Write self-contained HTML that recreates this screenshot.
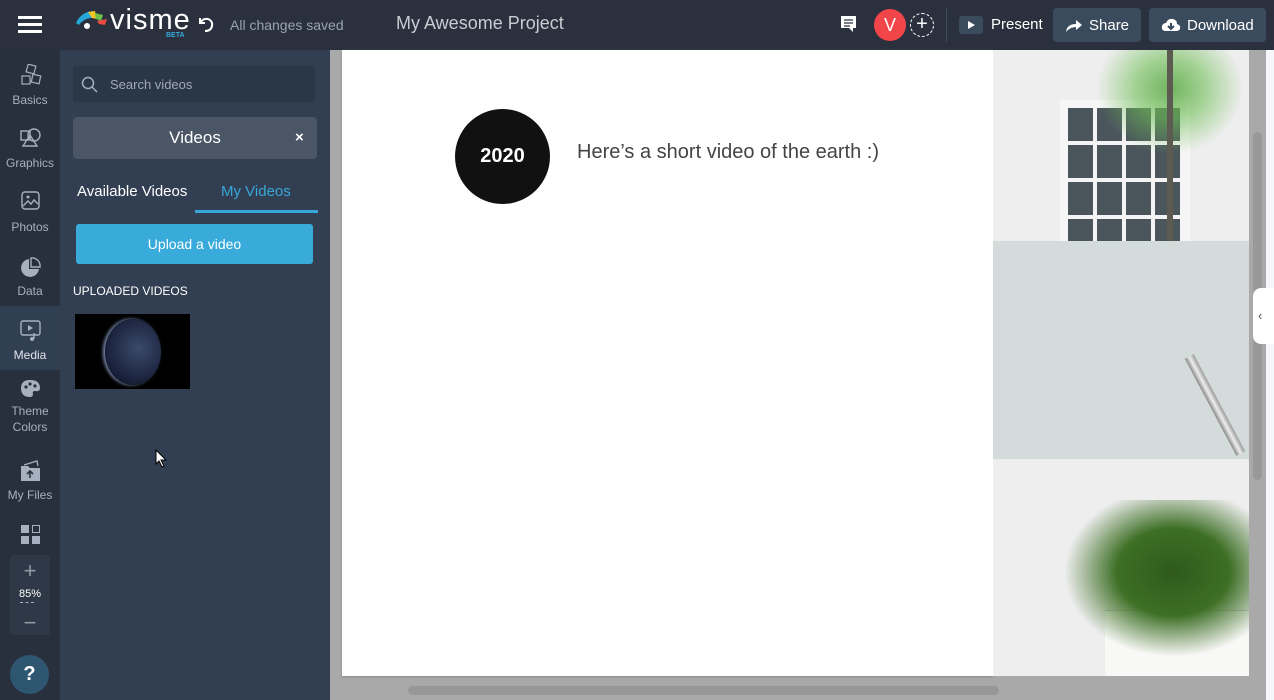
<!DOCTYPE html>
<html><head><meta charset="utf-8"><style>
*{margin:0;padding:0;box-sizing:border-box}
body{width:1274px;height:700px;overflow:hidden;font-family:"Liberation Sans",sans-serif;background:#a9a9a9;position:relative}
.abs{position:absolute}
#top{left:0;top:0;width:1274px;height:50px;background:#2a303d}
#rail{left:0;top:50px;width:60px;height:650px;background:#29303d}
#panel{left:60px;top:50px;width:270px;height:650px;background:#323f52}
.ri{position:absolute;left:0;width:60px;text-align:center;color:#a7b0be;font-family:"Liberation Sans Narrow","Liberation Sans",sans-serif;font-size:12px}
.btn{position:absolute;top:8px;height:34px;border-radius:4px;background:#3b4b5e;color:#fff;font-size:15px;line-height:34px}
</style></head><body>
<div id="top" class="abs">
 <div class="abs" style="left:18px;top:16px;width:24px;height:3px;background:#fff;box-shadow:0 7px 0 #fff,0 14px 0 #fff"></div>
 <svg class="abs" style="left:75px;top:9px" width="34" height="22" viewBox="0 0 34 22"><path d="M1 14 Q6 3 18 2 L20 9 Q10 8 4 16Z" fill="#26a8d8"/><path d="M13 3 L20 2 L22 10 L17 9Z" fill="#f3c623"/><path d="M20 4 L28 6 L26 12 L21 10Z" fill="#6fbf4a"/><path d="M22 12 L32 10 L30 16 L24 15Z" fill="#e84a3c"/><circle cx="12" cy="17" r="3" fill="#fff"/></svg>
 <div class="abs" style="left:110px;top:4px;color:#fff;font-size:29px;letter-spacing:1px">visme</div>
 <div class="abs" style="left:166px;top:32px;color:#36a9de;font-size:7px;font-weight:bold">BETA</div>
 <svg class="abs" style="left:196px;top:14px" width="20" height="20" viewBox="0 0 20 20"><path d="M4 4 V9 H9 M4 9 Q7 4 12 5 Q17 7 16 12 Q15 17 9 17" fill="none" stroke="#fff" stroke-width="2"/></svg>
 <div class="abs" style="left:230px;top:17px;color:#9ba3ae;font-size:14px">All changes saved</div>
 <div class="abs" style="left:396px;top:13px;color:#c8ccd3;font-size:18px">My Awesome Project</div>
 <svg class="abs" style="left:840px;top:15px" width="17" height="19" viewBox="0 0 17 19"><path d="M1 1 H16 V13 H13 V17 L9 13 H1Z" fill="#fff"/><path d="M4 5H13M4 8H13M4 11H10" stroke="#2a303d" stroke-width="1.3"/></svg>
 <div class="abs" style="left:874px;top:9px;width:32px;height:32px;border-radius:50%;background:#f1454a;color:#fff;font-size:18px;text-align:center;line-height:32px">V</div>
 <div class="abs" style="left:910px;top:13px;width:24px;height:24px;border-radius:50%;border:1px dashed #fff;color:#fff;text-align:center;line-height:21px;font-size:20px">+</div>
 <div class="abs" style="left:946px;top:8px;width:1px;height:34px;background:#444c58"></div>
 <div class="abs" style="left:959px;top:16px;width:24px;height:18px;border-radius:3px;background:#3b4b5e"><div style="margin:5px 0 0 9px;width:0;height:0;border-left:7px solid #fff;border-top:4px solid transparent;border-bottom:4px solid transparent"></div></div>
 <div class="abs" style="left:991px;top:16px;color:#fff;font-size:15px">Present</div>
 <div class="btn" style="left:1053px;width:88px"><svg style="position:absolute;left:12px;top:10px" width="18" height="15" viewBox="0 0 18 15"><path d="M1 14 Q2 6 11 6 V2 L17 7 L11 12 V9 Q5 9 1 14Z" fill="#fff"/></svg><span style="position:absolute;left:36px;top:1px">Share</span></div>
 <div class="btn" style="left:1149px;width:117px"><svg style="position:absolute;left:12px;top:9px" width="20" height="16" viewBox="0 0 20 16"><path d="M5 14 Q0 14 1 9 Q2 6 5 6 Q7 1 12 2 Q16 3 16 7 Q20 8 19 12 Q18 14 15 14Z" fill="#fff"/><path d="M10 6V11M7 9L10 12L13 9" stroke="#3b4b5e" stroke-width="2" fill="none"/></svg><span style="position:absolute;left:38px;top:1px">Download</span></div>
</div>
<div id="rail" class="abs">
 <svg class="abs" style="left:19px;top:14px" width="24" height="24" viewBox="0 0 24 24" fill="none" stroke="#a7b0be" stroke-width="1.2"><rect x="8" y="1" width="8" height="8" transform="rotate(15 12 5)"/><rect x="3" y="12" width="8" height="8"/><rect x="13" y="11" width="8" height="8" transform="rotate(12 17 15)"/></svg>
 <div class="ri" style="top:43px">Basics</div>
 <svg class="abs" style="left:20px;top:77px" width="22" height="20" viewBox="0 0 22 20"><rect x="1" y="4" width="9" height="9" fill="none" stroke="#a7b0be" stroke-width="1.4"/><circle cx="14" cy="8" r="6" fill="none" stroke="#a7b0be" stroke-width="1.4"/><path d="M10 8 L3 19 H17Z" fill="none" stroke="#a7b0be" stroke-width="1.4"/></svg>
 <div class="ri" style="top:106px">Graphics</div>
 <svg class="abs" style="left:21px;top:141px" width="19" height="19" viewBox="0 0 19 19"><rect x="1" y="1" width="17" height="17" rx="3" fill="none" stroke="#a7b0be" stroke-width="1.4"/><path d="M2 15 L7 10 L10 13 L13 9 L17 13" fill="none" stroke="#a7b0be" stroke-width="1.4"/><circle cx="7" cy="6" r="1.5" fill="#a7b0be"/></svg>
 <div class="ri" style="top:170px">Photos</div>
 <svg class="abs" style="left:20px;top:207px" width="21" height="21" viewBox="0 0 21 21"><path d="M9 2 A9 9 0 1 0 19 12 H9Z" fill="#a7b0be"/><path d="M11 1 A8 8 0 0 1 20 10 H11Z" fill="none" stroke="#a7b0be" stroke-width="1.4"/></svg>
 <div class="ri" style="top:234px">Data</div>
 <div class="abs" style="left:0;top:256px;width:60px;height:64px;background:#304052"></div>
 <svg class="abs" style="left:20px;top:270px" width="21" height="22" viewBox="0 0 21 22"><rect x="1" y="1" width="19" height="14" rx="2" fill="none" stroke="#a7b0be" stroke-width="1.4"/><path d="M8 5 L13 8 L8 11Z" fill="#a7b0be"/><path d="M14 13 V19" stroke="#a7b0be" stroke-width="1.4"/><circle cx="12" cy="19" r="2" fill="#a7b0be"/></svg>
 <div class="ri" style="top:298px;color:#dfe3e8">Media</div>
 <svg class="abs" style="left:20px;top:329px" width="21" height="19" viewBox="0 0 21 19"><path d="M10 1 Q20 1 20 9 Q20 13 15 12 Q12 12 13 15 Q13 18 10 18 Q1 18 1 9 Q1 1 10 1Z" fill="#a7b0be"/><circle cx="6" cy="8" r="1.6" fill="#29303d"/><circle cx="10" cy="5" r="1.6" fill="#29303d"/><circle cx="15" cy="7" r="1.6" fill="#29303d"/></svg>
 <div class="ri" style="top:353px;line-height:16px">Theme<br>Colors</div>
 <svg class="abs" style="left:20px;top:410px" width="21" height="22" viewBox="0 0 21 22"><path d="M1 6 H8 L10 8 H20 V21 H1Z" fill="#a7b0be"/><path d="M4 5 L17 1 L18 6" fill="none" stroke="#a7b0be" stroke-width="1.3"/><path d="M10 18 V11 M7 14 L10 11 L13 14" stroke="#29303d" stroke-width="1.6" fill="none"/></svg>
 <div class="ri" style="top:438px">My Files</div>
 <div class="abs" style="left:21px;top:475px;width:8px;height:8px;background:#a7b0be"></div><div class="abs" style="left:32px;top:475px;width:8px;height:8px;border:1px solid #a7b0be"></div>
 <div class="abs" style="left:21px;top:486px;width:8px;height:8px;background:#a7b0be"></div><div class="abs" style="left:32px;top:486px;width:8px;height:8px;background:#a7b0be"></div>
 <div class="abs" style="left:10px;top:505px;width:40px;height:80px;border-radius:3px;background:#2e3847"></div>
 <div class="ri" style="top:508px;font-size:22px;color:#8f99a6">+</div>
 <div class="ri" style="top:538px;color:#fff;font-size:11px">85%</div>
 <div class="abs" style="left:20px;top:552px;width:14px;border-top:1px dashed #a7b0be"></div>
 <div class="ri" style="top:560px;font-size:22px;color:#8f99a6">−</div>
 <div class="abs" style="left:10px;top:605px;width:39px;height:39px;border-radius:50%;background:#2e5670;color:#fff;font-size:20px;font-weight:bold;text-align:center;line-height:39px">?</div>
</div>
<div id="panel" class="abs">
 <div class="abs" style="left:13px;top:16px;width:242px;height:36px;border-radius:3px;background:#2a3746"></div>
 <svg class="abs" style="left:21px;top:26px" width="18" height="18" viewBox="0 0 18 18"><circle cx="7" cy="7" r="5.5" fill="none" stroke="#a7b0be" stroke-width="1.5"/><path d="M11 11 L16 16" stroke="#a7b0be" stroke-width="1.5"/></svg>
 <div class="abs" style="left:50px;top:27px;color:#a0a8b4;font-size:13px">Search videos</div>
 <div class="abs" style="left:13px;top:67px;width:244px;height:42px;border-radius:4px;background:#4a5666;color:#fff;font-size:17px;text-align:center;line-height:42px">Videos</div>
 <div class="abs" style="left:235px;top:79px;color:#fff;font-size:15px;font-weight:bold">×</div>
 <div class="abs" style="left:17px;top:133px;color:#fff;font-size:15px">Available Videos</div>
 <div class="abs" style="left:161px;top:133px;color:#37a7d8;font-size:15px">My Videos</div>
 <div class="abs" style="left:135px;top:160px;width:123px;height:3px;background:#37a7d8"></div>
 <div class="abs" style="left:16px;top:174px;width:237px;height:40px;border-radius:3px;background:#38abda;color:#fff;font-size:14px;text-align:center;line-height:40px">Upload a video</div>
 <div class="abs" style="left:13px;top:234px;color:#fff;font-size:12px">UPLOADED VIDEOS</div>
 <div class="abs" style="left:15px;top:264px;width:115px;height:75px;background:#000;overflow:hidden"><div style="position:absolute;left:30px;top:5px;width:56px;height:66px;border-radius:50%;background:radial-gradient(circle at 60% 45%,#3a4a6a,#1c2540 60%,#0a0e1a);box-shadow:-2px 0 3px #7b8fb0"></div></div>
 <svg class="abs" style="left:95px;top:399px" width="13" height="20" viewBox="0 0 13 20"><path d="M1 1 V15 L4 12 L7 18 L9 17 L6 11 H11Z" fill="#fff" stroke="#000"/></svg>
</div>
<div class="abs" style="left:342px;top:50px;width:651px;height:626px;background:#fff;box-shadow:0 1px 2px #888"></div>
<div class="abs" style="left:455px;top:109px;width:95px;height:95px;border-radius:50%;background:#111;color:#fff;font-size:20px;font-weight:bold;text-align:center;line-height:95px">2020</div>
<div class="abs" style="left:577px;top:141px;color:#444;font-size:20px">Here’s a short video of the earth :)</div>
<div class="abs" style="left:993px;top:50px;width:256px;height:191px;background:#eeeeee"></div>
<div class="abs" style="left:1060px;top:100px;width:130px;height:141px;background:#f6f6f6"></div>
<div class="abs" style="left:1068px;top:108px;width:114px;height:133px;background:repeating-linear-gradient(90deg,#4a565c 0 25px,#f4f4f4 25px 29px),#4a565c"></div>
<div class="abs" style="left:1068px;top:108px;width:114px;height:133px;background:repeating-linear-gradient(180deg,transparent 0 33px,#f4f4f4 33px 37px)"></div>
<div class="abs" style="left:1090px;top:50px;width:160px;height:110px;background:radial-gradient(ellipse at 50% 35%,rgba(90,170,70,.85) 0,rgba(110,190,85,.6) 30%,transparent 65%)"></div>
<div class="abs" style="left:1167px;top:50px;width:6px;height:191px;background:#5d5a52"></div>
<div class="abs" style="left:993px;top:241px;width:256px;height:218px;background:#d3dcdb"></div>
<div class="abs" style="left:1210px;top:350px;width:10px;height:110px;background:linear-gradient(90deg,#888,#eee,#999);transform:rotate(-28deg)"></div>
<div class="abs" style="left:993px;top:459px;width:256px;height:217px;background:#eeeeee"></div>
<div class="abs" style="left:1105px;top:610px;width:144px;height:66px;background:#f8f8f6;border-top:1px solid #ccc"></div>
<div class="abs" style="left:1060px;top:500px;width:189px;height:160px;background:radial-gradient(ellipse at 60% 45%,#2e5a1c 0,#3d6f25 35%,transparent 68%)"></div>
<div class="abs" style="left:1253px;top:132px;width:9px;height:348px;border-radius:5px;background:#999"></div>
<div class="abs" style="left:1266px;top:50px;width:8px;height:650px;background:#f5f7fa"></div>
<div class="abs" style="left:1253px;top:288px;width:21px;height:56px;border-radius:8px 0 0 8px;background:#fff;color:#555;font-size:13px;line-height:56px;padding-left:5px">‹</div>
<div class="abs" style="left:408px;top:686px;width:591px;height:9px;border-radius:5px;background:#979797"></div>
</body></html>
